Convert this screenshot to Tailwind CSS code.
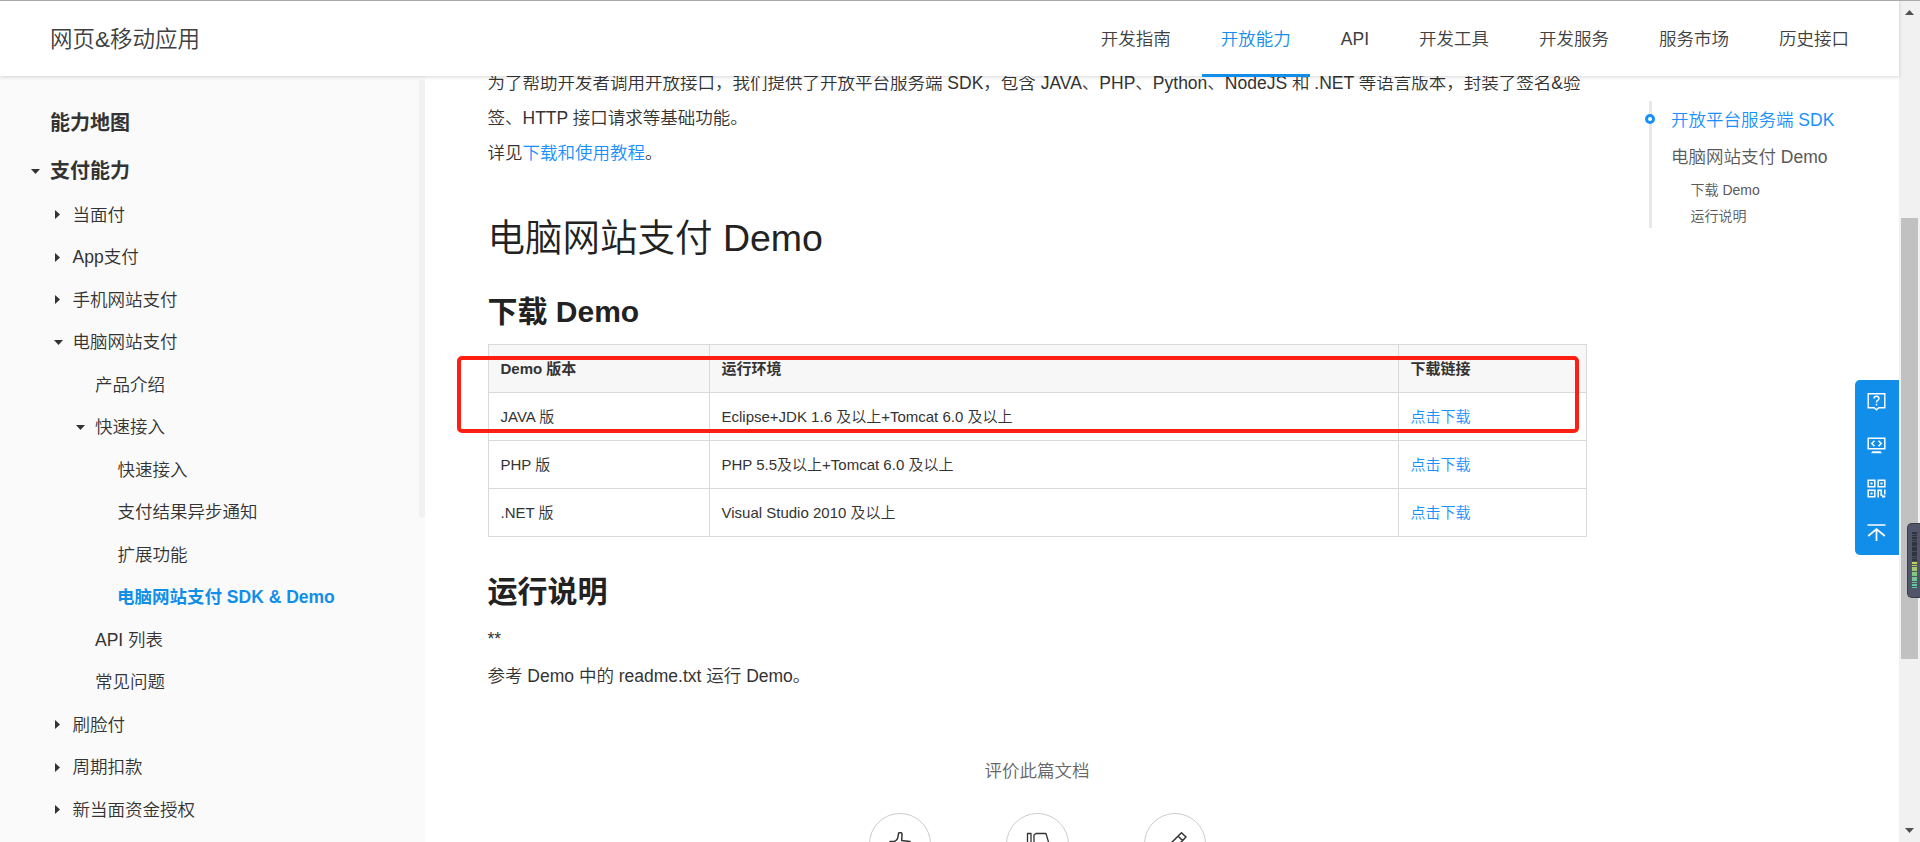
<!DOCTYPE html>
<html lang="zh-CN">
<head>
<meta charset="utf-8">
<title>网页&amp;移动应用</title>
<script src="https://cdn.jsdelivr.net/npm/@tailwindcss/browser@4"></script>
</head>
<body class="relative flex h-[842px] w-[1920px] overflow-hidden bg-white font-['Liberation_Sans','Noto_Sans_CJK_SC',sans-serif] text-[17.5px] font-[350] text-[#333]">

<div class="flex h-full w-[1899px] flex-col">
  <header class="relative z-10 flex h-[76px] shrink-0 items-stretch justify-between border-t border-[#a9a9ae] bg-white px-[50px] shadow-[0_1px_4px_rgba(0,0,0,0.16)]">
    <div class="flex items-center pt-[3px] text-[22.5px] text-[#404040]">网页&amp;移动应用</div>
    <nav class="-mr-[18.75px] -mb-px flex items-stretch gap-[12.5px] text-[#404040]">
      <a class="flex items-center px-[18.75px]">开发指南</a>
      <a class="flex items-center border-b-[3px] border-[#108ee9] px-[18.75px] pt-[3px] text-[#108ee9]">开放能力</a>
      <a class="flex items-center px-[18.75px]">API</a>
      <a class="flex items-center px-[18.75px]">开发工具</a>
      <a class="flex items-center px-[18.75px]">开发服务</a>
      <a class="flex items-center px-[18.75px]">服务市场</a>
      <a class="flex items-center px-[18.75px]">历史接口</a>
    </nav>
  </header>

  <div class="flex min-h-0 flex-1">
    <aside class="flex w-[425px] shrink-0 justify-between bg-[#fafafa]">
      <ul class="pt-[23px]">
        <li class="flex h-12 items-center pl-[50px] text-[20px] font-bold">能力地图</li>
        <li class="-mb-[1.500px] flex h-12 items-center gap-[10px] pl-[31px] text-[20px] font-bold"><svg class="h-[5px] w-[9px]" viewBox="0 0 9 5"><path d="M0 0h9L4.500 5z" fill="#333"/></svg>支付能力</li>
        <li class="flex h-[42.5px] items-center gap-[13px] pl-[54.500px]"><svg class="h-[9px] w-[5px]" viewBox="0 0 5 9"><path d="M0 0v9l5-4.500z" fill="#333"/></svg>当面付</li>
        <li class="flex h-[42.5px] items-center gap-[13px] pl-[54.500px]"><svg class="h-[9px] w-[5px]" viewBox="0 0 5 9"><path d="M0 0v9l5-4.500z" fill="#333"/></svg>App支付</li>
        <li class="flex h-[42.5px] items-center gap-[13px] pl-[54.500px]"><svg class="h-[9px] w-[5px]" viewBox="0 0 5 9"><path d="M0 0v9l5-4.500z" fill="#333"/></svg>手机网站支付</li>
        <li class="flex h-[42.5px] items-center gap-[10px] pl-[53.500px]"><svg class="h-[5px] w-[9px]" viewBox="0 0 9 5"><path d="M0 0h9L4.500 5z" fill="#333"/></svg>电脑网站支付</li>
        <li class="flex h-[42.5px] items-center pl-[95px]">产品介绍</li>
        <li class="flex h-[42.5px] items-center gap-[10px] pl-[76px]"><svg class="h-[5px] w-[9px]" viewBox="0 0 9 5"><path d="M0 0h9L4.500 5z" fill="#333"/></svg>快速接入</li>
        <li class="flex h-[42.5px] items-center pl-[117.500px]">快速接入</li>
        <li class="flex h-[42.5px] items-center pl-[117.500px]">支付结果异步通知</li>
        <li class="flex h-[42.5px] items-center pl-[117.500px]">扩展功能</li>
        <li class="flex h-[42.5px] items-center pl-[117px] font-bold whitespace-pre text-[#108ee9]">电脑网站支付 SDK &amp; Demo</li>
        <li class="flex h-[42.5px] items-center pl-[95px]">API 列表</li>
        <li class="flex h-[42.5px] items-center pl-[95px]">常见问题</li>
        <li class="flex h-[42.5px] items-center gap-[13px] pl-[54.500px]"><svg class="h-[9px] w-[5px]" viewBox="0 0 5 9"><path d="M0 0v9l5-4.500z" fill="#333"/></svg>刷脸付</li>
        <li class="flex h-[42.5px] items-center gap-[13px] pl-[54.500px]"><svg class="h-[9px] w-[5px]" viewBox="0 0 5 9"><path d="M0 0v9l5-4.500z" fill="#333"/></svg>周期扣款</li>
        <li class="flex h-[42.5px] items-center gap-[13px] pl-[54.500px]"><svg class="h-[9px] w-[5px]" viewBox="0 0 5 9"><path d="M0 0v9l5-4.500z" fill="#333"/></svg>新当面资金授权</li>
      </ul>
      <div class="mt-1 h-[438px] w-[6px] rounded-full bg-[#f1f1f1]"></div>
    </aside>

    <main class="-mt-[10px] ml-[62.500px] w-[1099px] shrink-0">
      <p class="leading-[35px] whitespace-nowrap">为了帮助开发者调用开放接口，我们提供了开放平台服务端 SDK，包含 JAVA、PHP、Python、NodeJS 和 .NET 等语言版本，封装了签名&amp;验<br>签、HTTP 接口请求等基础功能。<br>详见<a class="text-[#1890ff]">下载和使用教程</a>。</p>
      <h1 class="mt-[42px] text-[37.5px] leading-[50px] text-[#222]">电脑网站支付 Demo</h1>
      <h2 class="mt-[29px] text-[30px] leading-[40px] font-bold text-[#222]">下载 Demo</h2>
      <table class="mt-3 w-[1098px] table-fixed border-collapse text-left text-[15px] leading-[23px]">
        <colgroup><col class="w-[221px]"><col class="w-[689px]"><col class="w-[188px]"></colgroup>
        <tr class="h-12 bg-[#f7f7f7] font-bold"><th class="border border-[#d9d9d9] px-3">Demo 版本</th><th class="border border-[#d9d9d9] px-3">运行环境</th><th class="border border-[#d9d9d9] px-3">下载链接</th></tr>
        <tr class="h-12"><td class="border border-[#d9d9d9] px-3">JAVA 版</td><td class="border border-[#d9d9d9] px-3">Eclipse+JDK 1.6 及以上+Tomcat 6.0 及以上</td><td class="border border-[#d9d9d9] px-3 text-[#1890ff]">点击下载</td></tr>
        <tr class="h-12"><td class="border border-[#d9d9d9] px-3">PHP 版</td><td class="border border-[#d9d9d9] px-3">PHP 5.5及以上+Tomcat 6.0 及以上</td><td class="border border-[#d9d9d9] px-3 text-[#1890ff]">点击下载</td></tr>
        <tr class="h-12"><td class="border border-[#d9d9d9] px-3">.NET 版</td><td class="border border-[#d9d9d9] px-3">Visual Studio 2010 及以上</td><td class="border border-[#d9d9d9] px-3 text-[#1890ff]">点击下载</td></tr>
      </table>
      <h2 class="mt-[35px] text-[30px] leading-[40px] font-bold text-[#222]">运行说明</h2>
      <p class="mt-[10px] mb-[2px] leading-[35px]">**</p>
      <p class="leading-[35px]">参考 Demo 中的 readme.txt 运行 Demo。</p>
      <div class="mt-[63px] text-center leading-[28px] text-[#666]">评价此篇文档</div>
      <div class="mt-7 flex justify-center gap-[75px] pl-px">
        <div class="flex size-[62.500px] shrink-0 items-center justify-center rounded-full border border-[#ccc]">
          <svg class="size-6" viewBox="0 0 24 24" fill="none" stroke="#333" stroke-width="1.500" stroke-linejoin="round"><path d="M2 9.500h4Q9.500 8.500 10 4.500L10.500 1.500Q10.800.5 12.200.5q2 0 1.800 2.500l-.3 5.500 8.300 1-2 13H2z"/></svg>
        </div>
        <div class="flex size-[62.500px] shrink-0 items-center justify-center rounded-full border border-[#ccc]">
          <svg class="size-6" viewBox="0 0 24 24" fill="none" stroke="#333" stroke-width="1.300" stroke-linejoin="round"><path d="M1.500 1.500h3.500v12h-3.500zM8 13.500V3l2-1.500h10l3.500 12h-8l1 8h-3z"/></svg>
        </div>
        <div class="flex size-[62.500px] shrink-0 items-center justify-center rounded-full border border-[#ccc]">
          <svg class="size-6" viewBox="0 0 24 24" fill="none" stroke="#333" stroke-width="1.500" stroke-linejoin="round"><path d="M2 22l1.500-6.500L18.500.800 23 5 8.500 20zM15 4l4.500 4.500"/></svg>
        </div>
      </div>
    </main>

    <aside class="relative mt-[25px] ml-[62px] h-[127px] border-l-[3px] border-[#e8e8e8] pt-px pl-[19.500px] text-[#595959]">
      <span class="absolute top-[13px] -left-[7px] size-[10px] rounded-full border-[3px] border-[#1890ff] bg-white"></span>
      <div class="flex h-[37px] items-center text-[#1890ff]">开放平台服务端 SDK</div>
      <div class="flex h-[37px] items-center">电脑网站支付 Demo</div>
      <div class="flex h-[27px] items-center pt-px pl-[19.500px] text-[14px]">下载 Demo</div>
      <div class="flex h-[26px] items-center pl-[19.500px] text-[14px]">运行说明</div>
    </aside>
  </div>
</div>

<div class="flex h-full w-[21px] flex-col items-center border-t border-[#a9a9ae] bg-[#f1f1f1] pt-[9px] pb-[9px]">
  <svg class="h-[5px] w-[9px]" viewBox="0 0 9 5"><path d="M0 5h9L4.500 0z" fill="#505050"/></svg>
  <div class="mt-[203px] h-[441px] w-[17px] bg-[#c1c1c1]"></div>
  <svg class="mt-auto h-[5px] w-[9px]" viewBox="0 0 9 5"><path d="M0 0h9L4.500 5z" fill="#505050"/></svg>
</div>

<!-- floating tools -->
<div class="absolute top-[380px] left-[1855px] z-20 flex h-[175px] w-11 flex-col items-center justify-between rounded-l-[5px] bg-[#108ee9] pt-[12px] pr-px pb-[13px]">
  <svg class="size-[19px]" viewBox="0 0 19 19" fill="none" stroke="#fff" stroke-width="1.400"><path d="M1.200 1.700h16.600v14h-6L9.500 17.800 7.200 15.700h-6z"/><path d="M7 6.500Q7 4.200 9.500 4.200T12 6.500Q12 7.800 10.500 8.500 9.500 9 9.500 10.500M9.500 11.800v1.700"/></svg>
  <svg class="size-[19px]" viewBox="0 0 19 19" fill="none" stroke="#fff" stroke-width="1.500"><path d="M1.200 2.200h16.600v10.600H1.200zM7.500 4.800 4.800 7.500l2.700 2.700M11.500 4.800l2.700 2.700-2.700 2.700"/><path d="M5.500 15.300h8l1.500 2h-11z" fill="#fff" stroke="none"/></svg>
  <svg class="size-[19px]" viewBox="0 0 19 19" fill="none" stroke="#fff" stroke-width="1.500"><path d="M1.200 1.200h6.600v6.600H1.200zM11.200 1.200h6.600v6.600h-6.600zM1.200 11.200h6.600v6.600H1.200zM11.200 18.500v-7.300h3v4M17.800 10.500v5"/><path d="M3.500 3.500h2v2h-2zM13.500 3.500h2v2h-2zM3.500 13.500h2v2h-2zM13.500 15h2v1.500h2.800v2H15V17h-1.500z" fill="#fff" stroke="none"/></svg>
  <svg class="size-[19px]" viewBox="0 0 19 19" fill="none" stroke="#fff" stroke-width="1.700"><path d="M.5 2h18M9.500 18V6.500M1.200 13l8.300-7 8.300 7"/></svg>
</div>

<!-- level meter -->
<div class="absolute top-[523px] left-[1907px] z-20 flex h-[75px] w-[13px] flex-col rounded-l-[5px] border-y border-l border-[#3a3d48] bg-[#50556a] py-[8px] pl-1">
  <div class="h-[30px] w-[5px] bg-[repeating-linear-gradient(to_bottom,#30333d_0_1.500px,#4a4f5f_1.500px_2.500px)]"></div>
  <div class="h-[27px] w-[5px] bg-linear-to-b from-[#c8d052] via-[#7cc586] to-[#53c8b0]">
    <div class="h-full w-full bg-[repeating-linear-gradient(to_bottom,transparent_0_1.500px,#4d5a60_1.500px_2.500px)]"></div>
  </div>
</div>

<!-- highlight frame -->
<div class="absolute top-[355.500px] left-[457px] z-20 h-[77px] w-[1121.500px] rounded-[5px] border-4 border-[#ff1f12]"></div>
</body>
</html>
